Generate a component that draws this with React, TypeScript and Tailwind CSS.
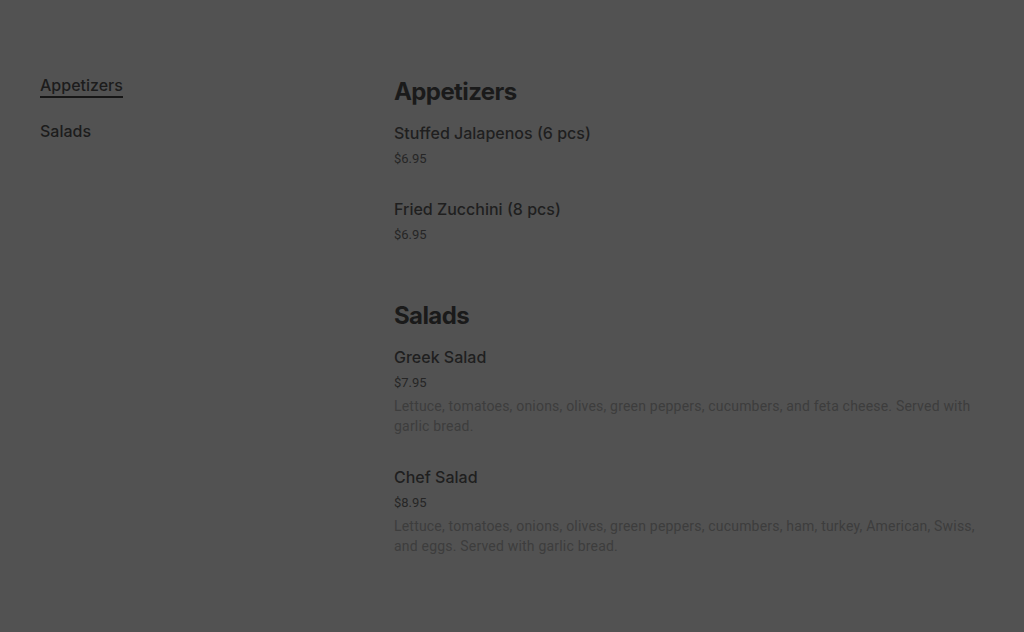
const sections = [
  {
    title: "Appetizers",
    items: [
      { name: "Stuffed Jalapenos (6 pcs)", price: "$6.95" },
      { name: "Fried Zucchini (8 pcs)", price: "$6.95" },
    ],
  },
  {
    title: "Salads",
    items: [
      {
        name: "Greek Salad",
        price: "$7.95",
        desc: "Lettuce, tomatoes, onions, olives, green peppers, cucumbers, and feta cheese. Served with garlic bread.",
      },
      {
        name: "Chef Salad",
        price: "$8.95",
        desc: "Lettuce, tomatoes, onions, olives, green peppers, cucumbers, ham, turkey, American, Swiss, and eggs. Served with garlic bread.",
      },
    ],
  },
] as { title: string; items: { name: string; price: string; desc?: string }[] }[];

export default function App() {
  return (
    <main className="min-h-[632px] bg-[#525252] font-['Inter',sans-serif]">
      <div className="flex px-10 pt-[73px] pb-10">
        <nav className="w-[354px] shrink-0">
          <ul className="flex flex-col gap-[21px] text-base font-medium leading-6 text-[#1c1c1c]">
            <li>
              <span className="inline-block border-b-2 border-[#161616] leading-[22px]">Appetizers</span>
            </li>
            <li>Salads</li>
          </ul>
        </nav>

        <div className="flex-1 pt-[2px]">
          {sections.map((section) => (
            <section key={section.title} className="mb-[26px]">
              <h2 className="pt-px text-2xl font-bold leading-8 tracking-tight text-[#1a1a1a]">{section.title}</h2>
              <div className="mt-[13px]">
                {section.items.map((item) => (
                  <div key={item.name} className={item.desc ? "pb-[29px]" : "pb-[28px]"}>
                    <div className="text-base font-medium leading-6 text-[#1f1f1f]">{item.name}</div>
                    <div className="mt-1 font-['Roboto',sans-serif] text-[13px] leading-5 text-[#262626]">
                      {item.price}
                    </div>
                    {item.desc && (
                      <p className="mt-[3px] font-['Roboto',sans-serif] text-sm leading-5 tracking-[0.2px] text-[#3d3d3d]">
                        {item.desc}
                      </p>
                    )}
                  </div>
                ))}
              </div>
            </section>
          ))}
        </div>
      </div>
    </main>
  );
}
